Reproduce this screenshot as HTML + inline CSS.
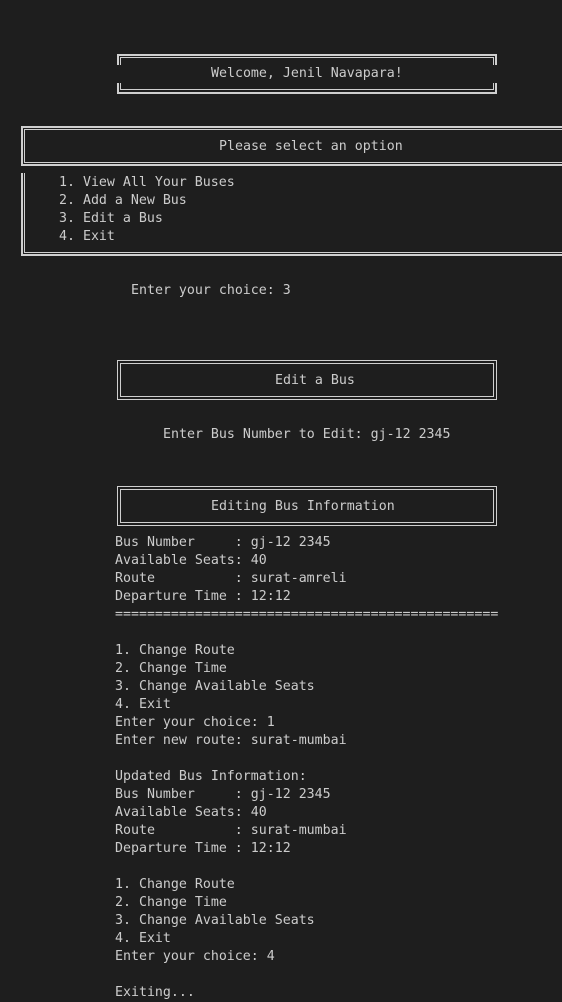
<!DOCTYPE html>
<html><head><style>
body{margin:0;width:562px;height:1002px;background:#1e1e1e;overflow:hidden;position:relative;font-family:"DejaVu Sans Mono","Liberation Mono",monospace;font-size:13.28px;color:#cccccc}
.t{position:absolute;white-space:pre;line-height:18px}
.l{position:absolute;background:#cfcfcf}
</style></head><body>
<!-- Welcome box -->
<div class="l" style="left:117px;top:54px;width:380px;height:2px"></div>
<div class="l" style="left:120px;top:57px;width:374px;height:1px"></div>
<div class="l" style="left:117px;top:92px;width:380px;height:2px"></div>
<div class="l" style="left:120px;top:89px;width:374px;height:1px"></div>
<div class="l" style="left:117px;top:54px;width:2px;height:11px"></div>
<div class="l" style="left:120px;top:57px;width:1px;height:8px"></div>
<div class="l" style="left:117px;top:83px;width:2px;height:11px"></div>
<div class="l" style="left:120px;top:83px;width:1px;height:7px"></div>
<div class="l" style="left:495px;top:54px;width:2px;height:11px"></div>
<div class="l" style="left:493px;top:57px;width:1px;height:8px"></div>
<div class="l" style="left:495px;top:83px;width:2px;height:11px"></div>
<div class="l" style="left:493px;top:83px;width:1px;height:7px"></div>
<div class="t" style="left:211px;top:65px">Welcome, Jenil Navapara!</div>
<!-- Please select -->
<div class="l" style="left:21px;top:126px;width:541px;height:2px"></div>
<div class="l" style="left:24px;top:129px;width:538px;height:1px"></div>
<div class="l" style="left:24px;top:162px;width:538px;height:1px"></div>
<div class="l" style="left:21px;top:164px;width:541px;height:2px"></div>
<div class="l" style="left:21px;top:126px;width:2px;height:40px"></div>
<div class="l" style="left:24px;top:129px;width:1px;height:34px"></div>
<div class="t" style="left:219px;top:138px">Please select an option</div>
<div class="l" style="left:21px;top:173px;width:2px;height:83px"></div>
<div class="l" style="left:24px;top:173px;width:1px;height:80px"></div>
<div class="l" style="left:24px;top:252px;width:538px;height:1px"></div>
<div class="l" style="left:21px;top:254px;width:541px;height:2px"></div>
<div class="t" style="left:59px;top:174px">1. View All Your Buses
2. Add a New Bus
3. Edit a Bus
4. Exit</div>
<div class="t" style="left:131px;top:282px">Enter your choice: 3</div>
<!-- Edit a Bus -->
<div style="position:absolute;left:117px;top:360px;width:378px;height:38px;border:1px solid #cfcfcf"></div>
<div style="position:absolute;left:120px;top:363px;width:372px;height:32px;border:1px solid #cfcfcf"></div>
<div class="t" style="left:275px;top:372px">Edit a Bus</div>
<div class="t" style="left:163px;top:426px">Enter Bus Number to Edit: gj-12 2345</div>
<!-- Editing -->
<div style="position:absolute;left:117px;top:486px;width:378px;height:38px;border:1px solid #cfcfcf"></div>
<div style="position:absolute;left:120px;top:489px;width:372px;height:32px;border:1px solid #cfcfcf"></div>
<div class="t" style="left:211px;top:498px">Editing Bus Information</div>
<div class="t" style="left:115px;top:534px">Bus Number     : gj-12 2345
Available Seats: 40
Route          : surat-amreli
Departure Time : 12:12
================================================

1. Change Route
2. Change Time
3. Change Available Seats
4. Exit
Enter your choice: 1
Enter new route: surat-mumbai

Updated Bus Information:
Bus Number     : gj-12 2345
Available Seats: 40
Route          : surat-mumbai
Departure Time : 12:12

1. Change Route
2. Change Time
3. Change Available Seats
4. Exit
Enter your choice: 4

Exiting...</div>
</body></html>
